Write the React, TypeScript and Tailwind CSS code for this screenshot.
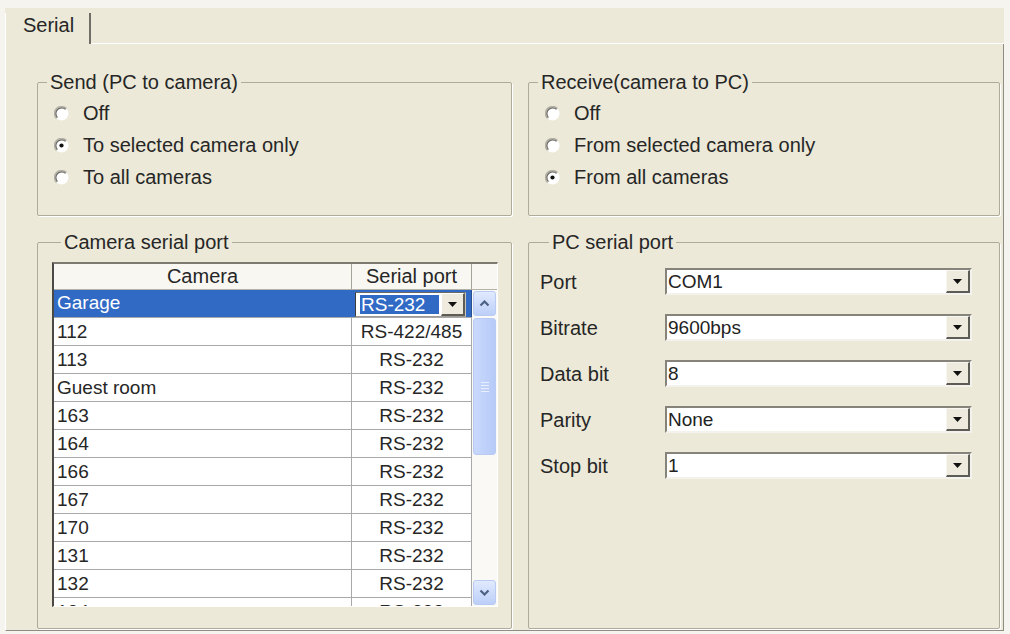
import React from "react";

type GroupProps = { title: string; className?: string; children?: React.ReactNode };

function Group({ title, className = "", children }: GroupProps) {
  return (
    <fieldset
      className={
        "m-0 min-w-0 border border-[#aeab9c] rounded-[2px] shadow-[1px_1px_0_#ffffff] " + className
      }
    >
      <legend className="ml-[9px] px-[3px] text-[20px] leading-[20px] text-[#262626]">{title}</legend>
      {children}
    </fieldset>
  );
}

function Radio({ checked }: { checked?: boolean }) {
  return (
    <svg width="15" height="15" viewBox="0 0 15 15" className="shrink-0">
      <circle cx="7.5" cy="7.5" r="7" fill="#ffffff" />
      <path d="M2.5 12.5 A7 7 0 0 1 12.5 2.5" stroke="#b3b0a4" strokeWidth="1.4" fill="none" />
      <path d="M3.4 11.6 A5.8 5.8 0 0 1 11.6 3.4" stroke="#6a6963" strokeWidth="1.3" fill="none" />
      {checked && <circle cx="7.5" cy="7.5" r="2.1" fill="#111111" />}
    </svg>
  );
}

function RadioRow({ label, checked }: { label: string; checked?: boolean }) {
  return (
    <div className="flex items-center h-[32px] pl-[16px]">
      <Radio checked={checked} />
      <span className="ml-[14px] text-[20px] leading-[24px] text-[#262626]">{label}</span>
    </div>
  );
}

function Combo({ value }: { value: string }) {
  return (
    <div className="w-[307px] h-[27px] flex bg-white border-2 border-t-[#85837a] border-l-[#85837a] border-r-[#f3f2ec] border-b-[#f3f2ec]">
      <div className="flex-1 pl-[1px] text-[19px] leading-[23px] text-[#222]">{value}</div>
      <div className="w-[24px] h-full bg-[#EEEBDE] border-t border-l border-t-[#f7f6f1] border-l-[#f7f6f1] border-r-2 border-b-2 border-r-[#5c5b56] border-b-[#5c5b56] flex items-center justify-center">
        <svg width="9" height="5" viewBox="0 0 9 5">
          <path d="M0 0H9L4.5 5Z" fill="#111111" />
        </svg>
      </div>
    </div>
  );
}

function Chevron({ up }: { up?: boolean }) {
  return (
    <svg width="11" height="7" viewBox="0 0 11 7">
      <path
        d={up ? "M1.5 5.5 L5.5 1.5 L9.5 5.5" : "M1.5 1.5 L5.5 5.5 L9.5 1.5"}
        stroke="#4d6185"
        strokeWidth="2.2"
        fill="none"
      />
    </svg>
  );
}

const rows: [string, string][] = [
  ["112", "RS-422/485"],
  ["113", "RS-232"],
  ["Guest room", "RS-232"],
  ["163", "RS-232"],
  ["164", "RS-232"],
  ["166", "RS-232"],
  ["167", "RS-232"],
  ["170", "RS-232"],
  ["131", "RS-232"],
  ["132", "RS-232"],
  ["134", "RS-232"],
];

export default function App() {
  return (
    <div className="w-[1010px] h-[634px] overflow-hidden bg-[#F5F4EF] pt-[8px] pl-[5px] pr-[6px] pb-[3px] flex flex-col text-[#262626] [font-family:'Liberation_Sans',Arial,sans-serif]">
      {/* tab strip */}
      <div className="flex h-[36px] shrink-0 bg-[#ECE9D8]">
        <div className="mt-[5px] w-[86px] border-l border-l-white border-r-2 border-r-[#6e6d67] pl-[17px] text-[20px] leading-[24px] text-[#262626]">
          Serial
        </div>
        <div className="flex-1 border-b border-b-white" />
      </div>

      {/* tab panel */}
      <div className="flex-1 min-h-0 bg-[#ECE9D8] border-l border-l-white border-r border-r-[#8f8d83] border-b border-b-[#8f8d83] pl-[31px] pr-[3px] pt-[28px] pb-[1px] flex flex-col gap-[16px]">
        {/* row 1 */}
        <div className="grid grid-cols-[475px_472px] gap-[16px] h-[144px] shrink-0">
          <Group title="Send (PC to camera)" className="pt-[5px]">
            <RadioRow label="Off" />
            <RadioRow label="To selected camera only" checked />
            <RadioRow label="To all cameras" />
          </Group>
          <Group title="Receive(camera to PC)" className="pt-[5px]">
            <RadioRow label="Off" />
            <RadioRow label="From selected camera only" />
            <RadioRow label="From all cameras" checked />
          </Group>
        </div>

        {/* row 2 */}
        <div className="grid grid-cols-[475px_472px] gap-[16px] flex-1 min-h-0">
          <Group title="Camera serial port" className="pt-[10px] pl-[14px]">
            <div className="w-[446px] h-[345px] flex flex-col overflow-hidden bg-white border-l-2 border-t-2 border-l-[#4a4946] border-t-[#7b7970] border-r border-b border-r-white border-b-white">
              {/* header */}
              <div className="flex h-[26px] shrink-0 bg-[#F8F7F2] border-b border-b-[#b3b1a8] text-[20px] leading-[25px] text-[#262626]">
                <div className="w-[298px] border-r border-r-[#a5a39a] text-center">Camera</div>
                <div className="w-[120px] border-r border-r-[#a5a39a] text-center">Serial port</div>
                <div className="flex-1" />
              </div>
              {/* body */}
              <div className="flex flex-1 min-h-0">
                <div className="w-[418px] flex flex-col overflow-hidden">
                  <div className="flex h-[28px] shrink-0 border-b border-b-[#a8a8a8]">
                    <div className="w-[298px] bg-[#316AC5] text-white pl-[3px] text-[19px] leading-[26px]">Garage</div>
                    <div className="w-[120px] bg-[#316AC5] border-r border-r-[#2a4f8f] pt-[2px] pl-[3px] pr-[5px]">
                      <div className="h-[25px] flex bg-white border border-t-[#6a6964] border-l-[#3d3c39] border-b-[#9c9a92] border-r-[#c9c6ba]">
                        <div className="flex-1 pl-[4px] pr-[2px] py-[2px] flex">
                          <div className="flex-1 bg-[#316AC5] text-white text-[19px] leading-[19px] pl-[1px]">RS-232</div>
                        </div>
                        <div className="w-[24px] bg-[#EEEBDE] border-t border-l border-t-white border-l-white border-r-2 border-b-2 border-r-[#5c5b56] border-b-[#5c5b56] flex items-center justify-center">
                          <svg width="9" height="5" viewBox="0 0 9 5">
                            <path d="M0 0H9L4.5 5Z" fill="#111111" />
                          </svg>
                        </div>
                      </div>
                    </div>
                  </div>
                  {rows.map(([cam, port]) => (
                    <div key={cam} className="flex h-[28px] shrink-0 border-b border-b-[#a8a8a8] text-[19px] leading-[27px] text-[#262626]">
                      <div className="w-[298px] border-r border-r-[#a8a8a8] pl-[3px]">{cam}</div>
                      <div className="w-[120px] border-r border-r-[#a8a8a8] text-center">{port}</div>
                    </div>
                  ))}
                </div>
                {/* scrollbar */}
                <div className="flex-1 bg-[#FAF9F5] flex flex-col items-center">
                  <div className="mt-[1px] w-[23px] h-[25px] rounded-[3px] border border-[#b9cbf3] bg-gradient-to-b from-[#e1eafe] to-[#bccff9] flex items-center justify-center">
                    <Chevron up />
                  </div>
                  <div className="mt-[2px] w-[23px] h-[137px] rounded-[3px] border border-[#b9cbf3] bg-gradient-to-r from-[#c9d8fc] to-[#b7cbf8] flex flex-col items-center justify-center gap-[2px]">
                    <div className="w-[8px] h-[1px] bg-[#e8efff]" />
                    <div className="w-[8px] h-[1px] bg-[#e8efff]" />
                    <div className="w-[8px] h-[1px] bg-[#e8efff]" />
                    <div className="w-[8px] h-[1px] bg-[#e8efff]" />
                  </div>
                  <div className="flex-1" />
                  <div className="mb-[1px] w-[23px] h-[25px] rounded-[3px] border border-[#b9cbf3] bg-gradient-to-b from-[#e1eafe] to-[#bccff9] flex items-center justify-center">
                    <Chevron />
                  </div>
                </div>
              </div>
            </div>
          </Group>

          <Group title="PC serial port" className="pt-[16px] pl-[11px]">
            <div className="flex flex-col gap-[19px]">
              {[
                ["Port", "COM1"],
                ["Bitrate", "9600bps"],
                ["Data bit", "8"],
                ["Parity", "None"],
                ["Stop bit", "1"],
              ].map(([label, value]) => (
                <div key={label} className="flex items-center h-[27px]">
                  <div className="w-[125px] text-[20px] leading-[24px] text-[#262626]">{label}</div>
                  <Combo value={value} />
                </div>
              ))}
            </div>
          </Group>
        </div>
      </div>
    </div>
  );
}
